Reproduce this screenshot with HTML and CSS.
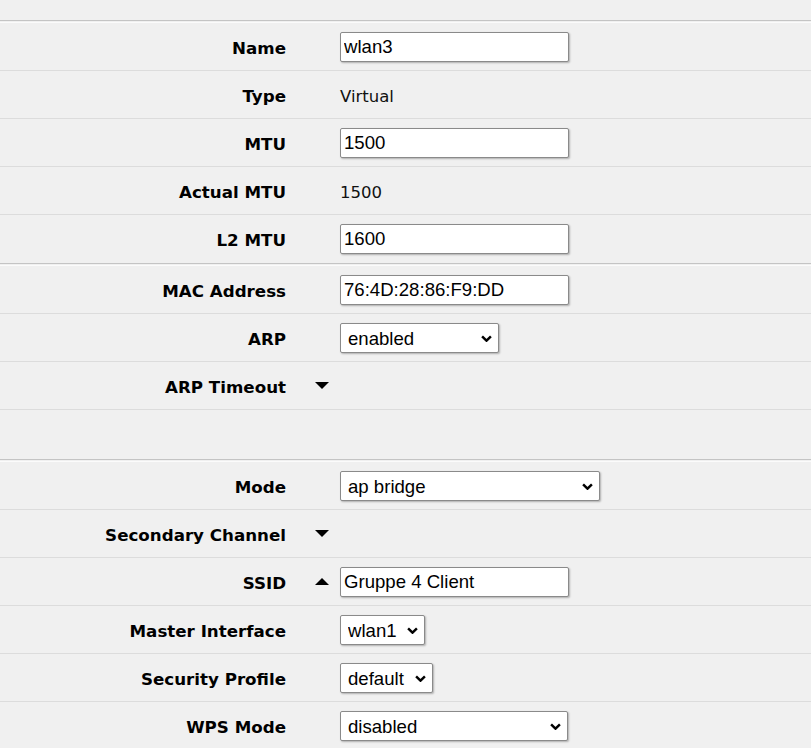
FILE: index.html
```html
<!DOCTYPE html>
<html>
<head>
<meta charset="utf-8">
<title>Interface wlan3</title>
<link rel="stylesheet" href="styles.css">
</head>
<body>
<div class="form">
  <div class="section">
    <div class="row"><div class="lbl">Name</div><div class="exp"></div><div class="val"><input class="txt" type="text" value="wlan3"></div></div>
    <div class="row"><div class="lbl">Type</div><div class="exp"></div><div class="val"><span class="static">Virtual</span></div></div>
    <div class="row"><div class="lbl">MTU</div><div class="exp"></div><div class="val"><input class="txt" type="text" value="1500"></div></div>
    <div class="row"><div class="lbl">Actual MTU</div><div class="exp"></div><div class="val"><span class="static">1500</span></div></div>
    <div class="row"><div class="lbl">L2 MTU</div><div class="exp"></div><div class="val"><input class="txt" type="text" value="1600"></div></div>
  </div>
  <div class="section">
    <div class="row"><div class="lbl">MAC Address</div><div class="exp"></div><div class="val"><input class="txt" type="text" value="76:4D:28:86:F9:DD"></div></div>
    <div class="row"><div class="lbl">ARP</div><div class="exp"></div><div class="val">
      <div class="sel w-arp"><select><option>enabled</option></select><svg class="chev" viewBox="0 0 10 6"><path d="M1 1 L5 5 L9 1"/></svg></div>
    </div></div>
    <div class="row"><div class="lbl">ARP Timeout</div><div class="exp"><svg class="tri" viewBox="0 0 14 7"><path d="M0 0 H14 L7 7 Z"/></svg></div><div class="val"></div></div>
    <div class="spacer"></div>
  </div>
  <div class="section">
    <div class="row"><div class="lbl">Mode</div><div class="exp"></div><div class="val">
      <div class="sel w-mode"><select><option>ap bridge</option></select><svg class="chev" viewBox="0 0 10 6"><path d="M1 1 L5 5 L9 1"/></svg></div>
    </div></div>
    <div class="row"><div class="lbl">Secondary Channel</div><div class="exp"><svg class="tri" viewBox="0 0 14 7"><path d="M0 0 H14 L7 7 Z"/></svg></div><div class="val"></div></div>
    <div class="row"><div class="lbl">SSID</div><div class="exp"><svg class="tri" viewBox="0 0 14 7"><path d="M0 7 H14 L7 0 Z"/></svg></div><div class="val"><input class="txt" type="text" value="Gruppe 4 Client"></div></div>
    <div class="row"><div class="lbl">Master Interface</div><div class="exp"></div><div class="val">
      <div class="sel w-master"><select><option>wlan1</option></select><svg class="chev" viewBox="0 0 10 6"><path d="M1 1 L5 5 L9 1"/></svg></div>
    </div></div>
    <div class="row"><div class="lbl">Security Profile</div><div class="exp"></div><div class="val">
      <div class="sel w-sec"><select><option>default</option></select><svg class="chev" viewBox="0 0 10 6"><path d="M1 1 L5 5 L9 1"/></svg></div>
    </div></div>
    <div class="row"><div class="lbl">WPS Mode</div><div class="exp"></div><div class="val">
      <div class="sel w-wps"><select><option>disabled</option></select><svg class="chev" viewBox="0 0 10 6"><path d="M1 1 L5 5 L9 1"/></svg></div>
    </div></div>
  </div>
</div>
</body>
</html>
```
FILE: styles.css
```css
html, body {
  margin: 0;
  padding: 0;
  background: #f0f0f0;
  overflow: hidden;
}
body {
  font-family: "DejaVu Sans", Verdana, sans-serif;
  color: #000;
}
.form {
  padding-top: 20px;
}
.section {
  border-top: 1px solid #c4c4c4;
  padding-top: 1px;
}
.section::before {
  content: "";
  display: block;
  height: 1px;
  background: #fbfbfb;
}
.row {
  display: grid;
  grid-template-columns: 286px 54px 1fr;
  align-items: center;
  height: 47px;
  border-bottom: 1px solid #dcdcdc;
}
.row:last-child {
  border-bottom-color: transparent;
}
.spacer {
  height: 49px;
}
.lbl {
  font-weight: bold;
  font-size: 16.7px;
  text-align: right;
  white-space: nowrap;
  padding-top: 2px;
}
.exp {
  display: flex;
  align-items: center;
  padding-left: 29px;
}
.tri {
  width: 14px;
  height: 7px;
  fill: #000;
}
.static {
  display: inline-block;
  font-size: 16.5px;
  color: #111;
  padding-top: 4px;
}
.txt {
  box-sizing: border-box;
  width: 229px;
  height: 30px;
  margin: 0;
  padding: 1px 3px 0;
  border: 1px solid #8a8a8a;
  border-radius: 2px;
  background: #fff;
  box-shadow: 1px 1px 2px rgba(0,0,0,0.28);
  font-family: "Liberation Sans", Arial, sans-serif;
  font-size: 18.6px;
  color: #000;
  outline: none;
}
.sel {
  position: relative;
  display: inline-block;
  height: 30px;
}
.sel select {
  -webkit-appearance: none;
  appearance: none;
  box-sizing: border-box;
  width: 100%;
  height: 30px;
  margin: 0;
  padding: 1px 24px 0 7px;
  border: 1px solid #8a8a8a;
  border-radius: 2px;
  background: #fff;
  box-shadow: 1px 1px 2px rgba(0,0,0,0.28);
  font-family: "Liberation Sans", Arial, sans-serif;
  font-size: 18.6px;
  color: #000;
  outline: none;
}
.chev {
  position: absolute;
  right: 7px;
  top: 12px;
  width: 11px;
  height: 7px;
  fill: none;
  stroke: #000;
  stroke-width: 2.2;
  pointer-events: none;
}
.w-arp { width: 159px; }
.w-mode { width: 260px; }
.w-master { width: 85px; }
.w-sec { width: 93px; }
.w-wps { width: 228px; }
```
